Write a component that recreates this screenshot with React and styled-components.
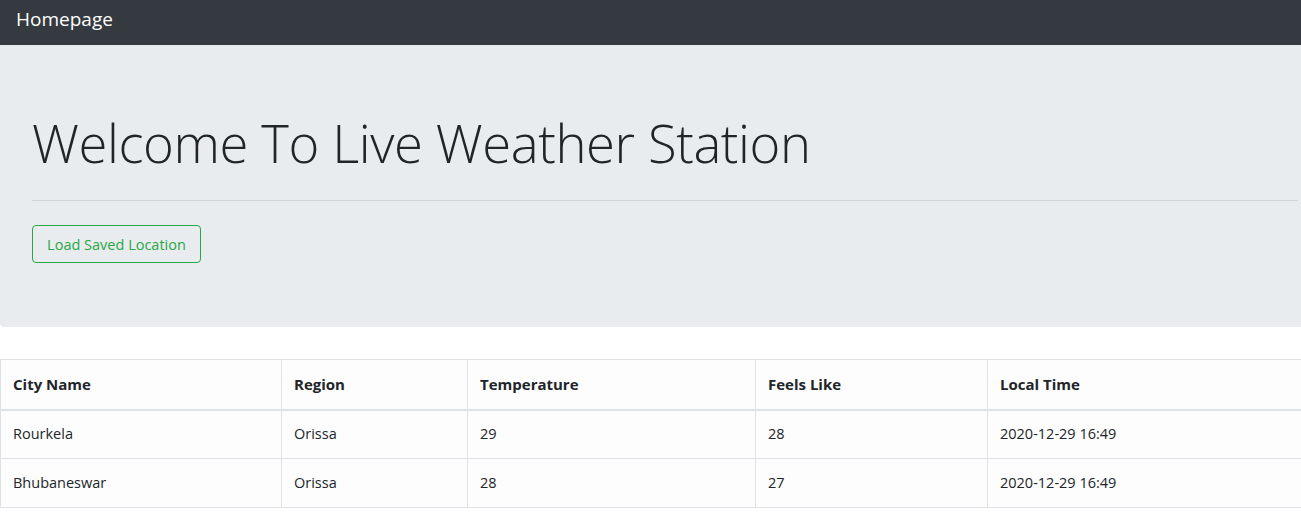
import React from 'react';
import styled, { createGlobalStyle } from 'styled-components';

const GlobalStyle = createGlobalStyle`
  html, body {
    margin: 0;
    padding: 0;
    background: #fff;
    overflow: hidden;
  }
  body {
    font-family: "Open Sans", "Noto Sans", sans-serif;
    font-size: 15px;
    line-height: 1.5;
    color: #212529;
  }
`;

const Page = styled.div`
  width: 1330px;
`;

const Navbar = styled.nav`
  height: 45px;
  background-color: #343a40;
  display: flex;
  align-items: center;
  padding: 0 16px;
  box-sizing: border-box;
`;

const Brand = styled.span`
  color: #fff;
  font-size: 19px;
  line-height: 1;
  margin-top: -6px;
`;

const Jumbotron = styled.section`
  background-color: #e9ecef;
  border-radius: 0 0 4px 4px;
  padding: 64px 32px;
  margin-bottom: 32px;
`;

const Heading = styled.h1`
  font-size: 52.6px;
  font-weight: 300;
  line-height: 67px;
  margin: 0;
  letter-spacing: -0.4px;
`;

const Rule = styled.hr`
  border: 0;
  border-top: 1px solid rgba(0, 0, 0, 0.1);
  margin: 24px 0 24px;
`;

const OutlineButton = styled.button`
  display: block;
  font-family: inherit;
  font-size: 14.5px;
  color: #28a745;
  background: transparent;
  border: 1px solid #28a745;
  border-radius: 4px;
  height: 38px;
  width: 169px;
  padding: 0 12px;
  cursor: pointer;
`;

const Table = styled.table`
  width: 100%;
  border-collapse: collapse;
  background: #fdfdfd;
`;

const HeadCell = styled.th`
  text-align: left;
  font-weight: 700;
  font-size: 15px;
  padding: 12px;
  height: 50px;
  box-sizing: border-box;
  border: 1px solid #dee2e6;
  border-bottom-width: 2px;
  width: ${p => p.$w || 'auto'};
`;

const Cell = styled.td`
  padding: 12px;
  font-size: 14.5px;
  font-weight: 400;
  height: 49px;
  box-sizing: border-box;
  border: 1px solid #dee2e6;
`;

const columns = [
  { label: 'City Name', w: '281px' },
  { label: 'Region', w: '186px' },
  { label: 'Temperature', w: '288px' },
  { label: 'Feels Like', w: '232px' },
  { label: 'Local Time' },
];

const rows = [
  ['Rourkela', 'Orissa', '29', '28', '2020-12-29 16:49'],
  ['Bhubaneswar', 'Orissa', '28', '27', '2020-12-29 16:49'],
];

export default function App() {
  return (
    <Page>
      <GlobalStyle />
      <Navbar>
        <Brand>Homepage</Brand>
      </Navbar>
      <Jumbotron>
        <Heading>Welcome To Live Weather Station</Heading>
        <Rule />
        <OutlineButton>Load Saved Location</OutlineButton>
      </Jumbotron>
      <Table>
        <thead>
          <tr>
            {columns.map(c => (
              <HeadCell key={c.label} $w={c.w}>{c.label}</HeadCell>
            ))}
          </tr>
        </thead>
        <tbody>
          {rows.map(r => (
            <tr key={r[0]}>
              {r.map((v, i) => <Cell key={i}>{v}</Cell>)}
            </tr>
          ))}
        </tbody>
      </Table>
    </Page>
  );
}
